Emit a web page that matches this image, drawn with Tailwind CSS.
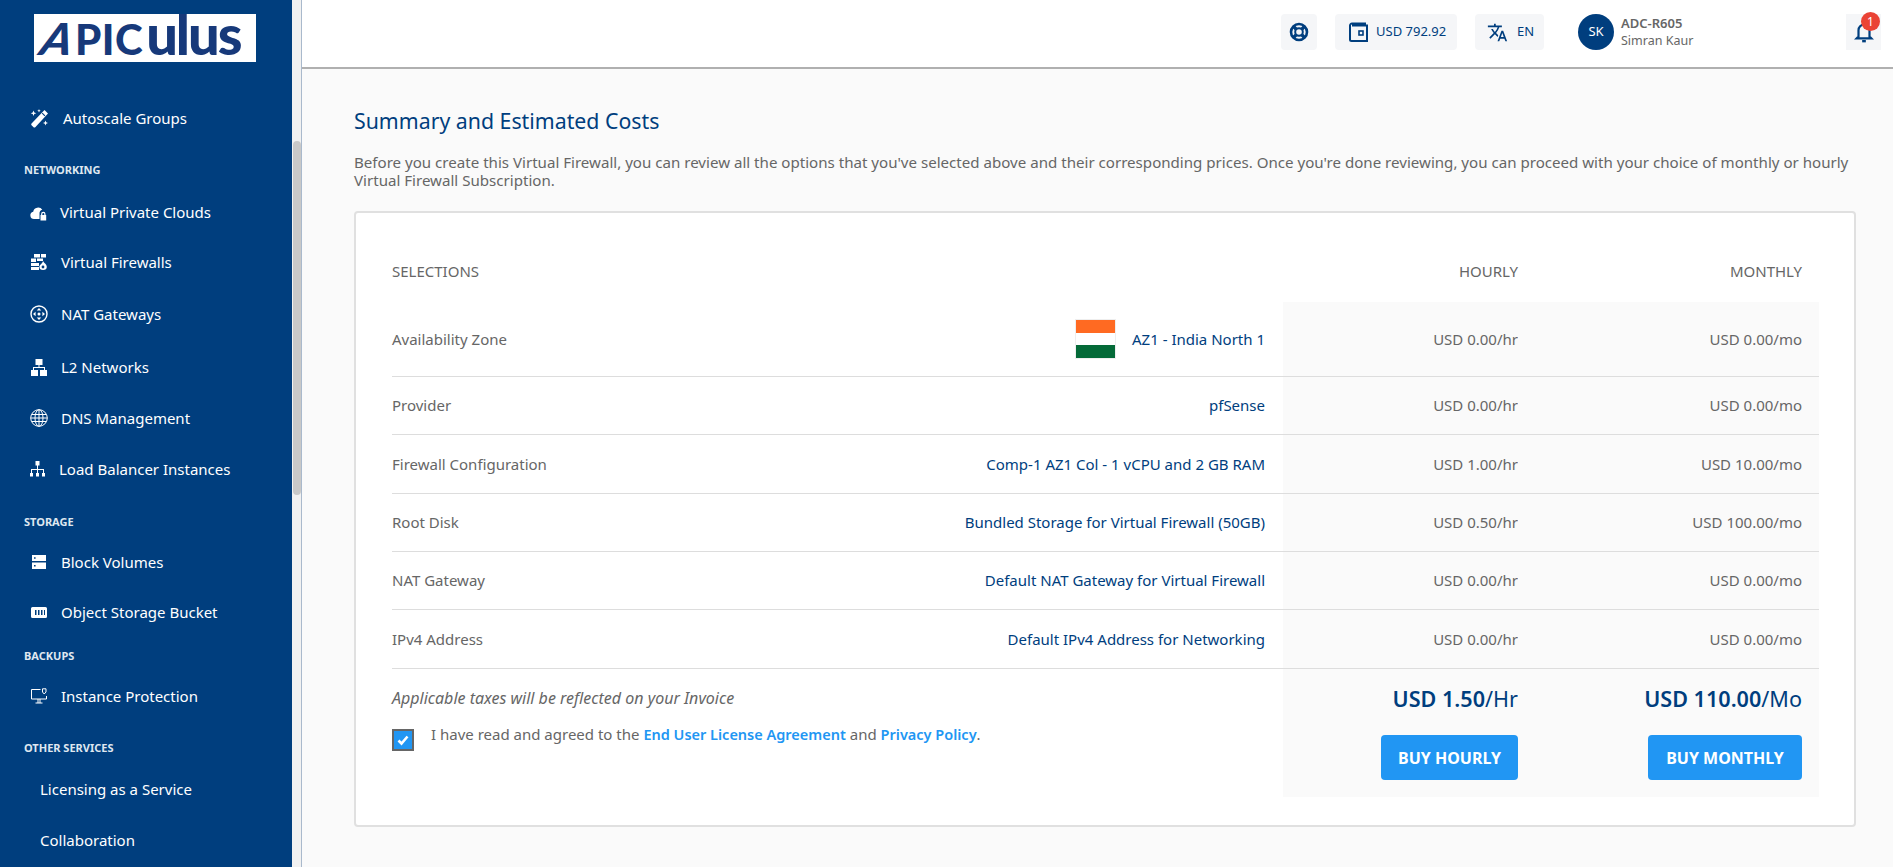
<!DOCTYPE html>
<html lang="en">
<head>
  <meta charset="UTF-8">
  <title>Summary and Estimated Costs</title>
  <script src="https://cdn.jsdelivr.net/npm/@tailwindcss/browser@4"></script>
</head>
<body class="font-['Noto_Sans',sans-serif] text-[15px] text-[#666] bg-[#fafafa] overflow-hidden">
<div class="flex h-[867px] overflow-hidden">
  <!-- Sidebar -->
  <aside class="relative w-[302px] shrink-0 h-full bg-[#f1f1f1] border-r border-[#a9b9cc] overflow-hidden">
    <div class="absolute left-[293px] top-[141px] w-[8px] h-[354px] rounded bg-[#c8c8c8]"></div>
    <div class="w-[292px] h-full bg-[#003e7e] text-white overflow-hidden">
      <div class="h-[93px] pl-[34px] pt-[14px]">
        <!-- logo, kept as real text -->
        <div class="w-[222px] h-[48px] bg-white flex items-baseline pl-[3px] font-['Lato',sans-serif] font-black leading-[40px] text-[#17397a]">
          <span class="text-[44px] skew-x-[-20deg] ml-[6px] mr-[1px]">A</span>
          <span class="text-[42px] tracking-[0.5px]">PIC</span>
          <span class="text-[56px] tracking-[-2px] ml-[3px]">ulus</span>
        </div>
      </div>
      <a class="flex items-center h-[50px] pl-[30px] gap-[14px]">
        <svg class="w-[19px] h-[19px]" viewBox="0 0 19 19" fill="white"><path d="M14.500 1 18 4.500 5.500 18a1.500 1.500 0 0 1-2.200 0L1.800 16.500a1.500 1.500 0 0 1 0-2.200z"/><path fill="#003e7e" d="M11.800 4.500l.8-.8 2.700 2.700-.8.8z"/><path d="M3.500 1.500l.8 2 2 .8-2 .8-.8 2-.8-2-2-.8 2-.8zM15.500 11.500l.7 1.800 1.800.7-1.800.7-.7 1.800-.7-1.800-1.800-.7 1.800-.7zM9 0l.5 1.200 1.200.5-1.200.5L9 3.400l-.5-1.200-1.200-.5 1.200-.5z"/></svg>
        <span>Autoscale Groups</span>
      </a>
      <div class="h-[20px] mt-[17px] pl-[24px] flex items-center text-[11px] font-bold text-[#dfe7f0]">NETWORKING</div>
      <a class="flex items-center h-[50px] mt-[7px] pl-[30px] gap-[13px]">
        <svg class="w-[17px] h-[17px]" viewBox="0 0 17 17" fill="white"><path d="M4 15a3.700 3.700 0 0 1-.8-7.300A5 5 0 0 1 12.300 5.800 4 4 0 0 0 9.500 10v5z"/><path fill-rule="evenodd" d="M10.500 11h.6v-1a2.200 2.200 0 0 1 4.400 0v1h.7v5.500h-5.700zM12.300 11h2v-1a1 1 0 0 0-2 0z"/></svg>
        <span>Virtual Private Clouds</span>
      </a>
      <a class="flex items-center h-[50px] pl-[31px] gap-[14px]">
        <svg class="w-[16px] h-[16px]" viewBox="0 0 16 16" fill="white"><path d="M3 0h6v3.500H3zM10 0h5v3.500h-5zM0 4.500h5V8H0zM6 4.500h6V7H6zM0 9h8v3H0zM0 13h8v3H0z"/><path d="M12 7c.6 1.600 3.800 3.400 3.800 5.800a3.700 3.200 0 0 1-7.400 0C8.400 10.800 11.500 9.800 12 7z"/><circle cx="12" cy="13" r="1.400" fill="#003e7e"/></svg>
        <span>Virtual Firewalls</span>
      </a>
      <a class="flex items-center h-[50px] mt-[2px] pl-[30px] gap-[13px]">
        <svg class="w-[18px] h-[18px]" viewBox="0 0 18 18" fill="none" stroke="white"><circle cx="9" cy="9" r="8" stroke-width="1.400"/><path fill="white" stroke="none" d="M9 3l2.300 2.600H6.700zM9 15l-2.300-2.600h4.600zM3 9l2.600-2.300v4.600zM15 9l-2.600 2.300V6.700z"/><circle cx="9" cy="9" r="1.500" fill="white" stroke="none"/></svg>
        <span>NAT Gateways</span>
      </a>
      <a class="flex items-center h-[50px] mt-[3px] pl-[31px] gap-[14px]">
        <svg class="w-[16px] h-[17px]" viewBox="0 0 16 17" fill="white"><path d="M4.500 0h7v6h-7zM0 11h7v6H0zM9 11h7v6H9z"/><path d="M7.500 5h1v3h5.500v3h-1V9H3v2H2V8h5.500z"/></svg>
        <span>L2 Networks</span>
      </a>
      <a class="flex items-center h-[50px] mt-[1px] pl-[30px] gap-[13px]">
        <svg class="w-[18px] h-[18px]" viewBox="0 0 18 18" fill="none" stroke="white" stroke-width="1"><circle cx="9" cy="9" r="8.300"/><ellipse cx="9" cy="9" rx="4" ry="8.300"/><path d="M9 1v16M.8 9h16.400M2 5.500h14M2 12.500h14"/></svg>
        <span>DNS Management</span>
      </a>
      <a class="flex items-center h-[50px] mt-[1px] pl-[30px] gap-[14px]">
        <svg class="w-[15px] h-[16px]" viewBox="0 0 15 16" fill="white"><path d="M5.500 0h4v4.500h-4zM7 4.500h1V8h6v4h-1V9H8v3H7V9H2v3H1V8h6z"/><path d="M0 12h3v3.500H0zM6 12h3v3.500H6zM12 12h3v3.500h-3z"/></svg>
        <span>Load Balancer Instances</span>
      </a>
      <div class="h-[20px] mt-[18px] pl-[24px] flex items-center text-[11px] font-bold text-[#dfe7f0]">STORAGE</div>
      <a class="flex items-center h-[50px] mt-[5px] pl-[32px] gap-[15px]">
        <svg class="w-[14px] h-[14px]" viewBox="0 0 14 14" fill="white"><path fill-rule="evenodd" d="M0 0h14v6H0zM2 2.200v1.600h1.600V2.200zM0 7.500h14V14H0zM2 10v1.600h1.600V10z"/></svg>
        <span>Block Volumes</span>
      </a>
      <a class="flex items-center h-[50px] pl-[31px] gap-[14px]">
        <svg class="w-[16px] h-[11px]" viewBox="0 0 16 11" fill="white"><path fill-rule="evenodd" d="M1.500 0h13A1.500 1.500 0 0 1 16 1.500v8a1.500 1.500 0 0 1-1.500 1.500h-13A1.500 1.500 0 0 1 0 9.500v-8A1.500 1.500 0 0 1 1.500 0zM4 3v5h1.500V3zM7 3v5h1.500V3zM10 3v5h1.500V3zM13 3v5h1V3z"/></svg>
        <span>Object Storage Bucket</span>
      </a>
      <div class="h-[20px] mt-[9px] pl-[24px] flex items-center text-[11px] font-bold text-[#dfe7f0]">BACKUPS</div>
      <a class="flex items-center h-[50px] mt-[5px] pl-[31px] gap-[14px]">
        <svg class="w-[16px] h-[16px]" viewBox="0 0 16 16" fill="none" stroke="white"><path d="M9.500 1.500H.5v9.500h15V8"/><path d="M4.500 15h7M7 11v4M9 11v4"/><path d="M11.500.8h3.500v3.200L13.200 6 11.500 4z" stroke-width="1"/></svg>
        <span>Instance Protection</span>
      </a>
      <div class="h-[20px] mt-[17px] pl-[24px] flex items-center text-[11px] font-bold text-[#dfe7f0]">OTHER SERVICES</div>
      <a class="flex items-center h-[50px] mt-[6px] pl-[40px]">Licensing as a Service</a>
      <a class="flex items-center h-[50px] mt-[1px] pl-[40px]">Collaboration</a>
    </div>
  </aside>

  <div class="flex-1 min-w-0">
    <!-- Header -->
    <header class="h-[69px] bg-white border-b-2 border-[#b0b0b0] relative">
      <div class="absolute left-[979px] top-[14px] flex items-center h-[36px]">
        <div class="w-[36px] h-[36px] rounded bg-[#f5f6f8] flex items-center justify-center">
          <svg class="w-[20px] h-[20px]" viewBox="0 0 20 20" fill="none" stroke="#003e7e"><circle cx="10" cy="10" r="8" stroke-width="2.600"/><circle cx="10" cy="10" r="3.800" stroke-width="2"/><path stroke-width="3.400" d="M4.500 4.500l2.500 2.500M15.500 4.500l-2.500 2.500M4.500 15.500l2.500-2.500M15.500 15.500l-2.500-2.500"/></svg>
        </div>
        <div class="ml-[18px] w-[122px] h-[36px] rounded bg-[#f5f6f8] flex items-center pl-[14px] gap-[8px] text-[13px] text-[#003e7e]">
          <svg class="w-[19px] h-[20px]" viewBox="0 0 19 20" fill="none" stroke="#003e7e" stroke-width="2"><path d="M16 3.500V1.500H3A2 2 0 0 0 1 3.500v14a1.500 1.500 0 0 0 1.500 1.500H18V3.500H3"/><rect x="10" y="9" width="4" height="4" stroke-width="1.600"/></svg>
          <span>USD 792.92</span>
        </div>
        <div class="ml-[18px] w-[69px] h-[36px] rounded bg-[#f5f6f8] flex items-center pl-[12px] gap-[9px] text-[13px] text-[#003e7e]">
          <svg class="w-[21px] h-[21px]" viewBox="0 0 24 24" fill="#003e7e"><path d="m12.870 15.070-2.540-2.510.030-.030A17.500 17.500 0 0 0 14.070 6H17V4h-7V2H8v2H1v1.990h11.170C11.500 7.920 10.440 9.750 9 11.350 8.070 10.320 7.300 9.190 6.690 8h-2c.73 1.630 1.730 3.170 2.980 4.560l-5.090 5.020L4 19l5-5 3.110 3.110zM18.500 10h-2L12 22h2l1.120-3h4.750L21 22h2zm-2.620 7 1.620-4.330L19.120 17z"/></svg>
          <span>EN</span>
        </div>
        <div class="ml-[34px] w-[36px] h-[36px] rounded-full bg-[#003e7e] text-white text-[13px] flex items-center justify-center">SK</div>
        <div class="ml-[7px] text-[13px] leading-[18px]">
          <div class="font-semibold">ADC-R605</div>
          <div class="text-[12.500px]">Simran Kaur</div>
        </div>
      </div>
      <div class="absolute left-[1544px] top-[14px] w-[35px] h-[36px] bg-[#f5f6f8] flex items-center justify-center">
        <svg class="w-[22px] h-[24px]" viewBox="0 0 24 24" fill="none" stroke="#003e7e" stroke-width="2.400"><path d="M6 17V10a6 6 0 0 1 12 0v7l2 2H4z"/><path d="M10 22h4" stroke-width="2.600"/></svg>
      </div>
      <div class="absolute left-[1559px] top-[12px] w-[19px] h-[19px] rounded-full bg-[#ea4335] text-white text-[12px] flex items-center justify-center">1</div>
    </header>

    <!-- Main -->
    <main class="pl-[52px] pr-[37px] pt-[38px]">
      <h1 class="text-[21.300px] leading-[28px] text-[#003e7e]">Summary and Estimated Costs</h1>
      <p class="mt-[18px] text-[15.100px] leading-[18px]">Before you create this Virtual Firewall, you can review all the options that you've selected above and their corresponding prices. Once you're done reviewing, you can proceed with your choice of monthly or hourly Virtual Firewall Subscription.</p>

      <section class="mt-[22px] w-[1502px] h-[616px] bg-white border-2 border-[#e0e0e0] rounded pl-[36px] pr-[35px]">
        <div class="flex items-center h-[89px] pt-[28px]">
          <div class="w-[891px]">SELECTIONS</div>
          <div class="w-[235px] text-right">HOURLY</div>
          <div class="w-[284px] text-right">MONTHLY</div>
        </div>

        <div class="flex items-stretch h-[75px] border-b border-[#ddd]">
          <div class="w-[891px] flex items-center justify-between pr-[18px]">
            <span>Availability Zone</span>
            <span class="flex items-center gap-[16px] text-[#003e7e]">
              <span class="flex flex-col w-[41px] h-[40px] border border-[#eee]">
                <span class="flex-1 bg-[#ff6a22]"></span><span class="flex-1 bg-white"></span><span class="flex-1 bg-[#046a38]"></span>
              </span>
              AZ1 - India North 1
            </span>
          </div>
          <div class="w-[235px] bg-[#fafafa] flex items-center justify-end">USD 0.00/hr</div>
          <div class="w-[301px] bg-[#fafafa] flex items-center justify-end pr-[17px]">USD 0.00/mo</div>
        </div>
        <div class="flex items-stretch h-[58px] border-b border-[#ddd]">
          <div class="w-[891px] flex items-center justify-between pr-[18px]"><span>Provider</span><span class="text-[#003e7e]">pfSense</span></div>
          <div class="w-[235px] bg-[#fafafa] flex items-center justify-end">USD 0.00/hr</div>
          <div class="w-[301px] bg-[#fafafa] flex items-center justify-end pr-[17px]">USD 0.00/mo</div>
        </div>
        <div class="flex items-stretch h-[59px] border-b border-[#ddd]">
          <div class="w-[891px] flex items-center justify-between pr-[18px]"><span>Firewall Configuration</span><span class="text-[#003e7e]">Comp-1 AZ1 Col - 1 vCPU and 2 GB RAM</span></div>
          <div class="w-[235px] bg-[#fafafa] flex items-center justify-end">USD 1.00/hr</div>
          <div class="w-[301px] bg-[#fafafa] flex items-center justify-end pr-[17px]">USD 10.00/mo</div>
        </div>
        <div class="flex items-stretch h-[58px] border-b border-[#ddd]">
          <div class="w-[891px] flex items-center justify-between pr-[18px]"><span>Root Disk</span><span class="text-[#003e7e]">Bundled Storage for Virtual Firewall (50GB)</span></div>
          <div class="w-[235px] bg-[#fafafa] flex items-center justify-end">USD 0.50/hr</div>
          <div class="w-[301px] bg-[#fafafa] flex items-center justify-end pr-[17px]">USD 100.00/mo</div>
        </div>
        <div class="flex items-stretch h-[58px] border-b border-[#ddd]">
          <div class="w-[891px] flex items-center justify-between pr-[18px]"><span>NAT Gateway</span><span class="text-[#003e7e]">Default NAT Gateway for Virtual Firewall</span></div>
          <div class="w-[235px] bg-[#fafafa] flex items-center justify-end">USD 0.00/hr</div>
          <div class="w-[301px] bg-[#fafafa] flex items-center justify-end pr-[17px]">USD 0.00/mo</div>
        </div>
        <div class="flex items-stretch h-[59px] border-b border-[#ddd]">
          <div class="w-[891px] flex items-center justify-between pr-[18px]"><span>IPv4 Address</span><span class="text-[#003e7e]">Default IPv4 Address for Networking</span></div>
          <div class="w-[235px] bg-[#fafafa] flex items-center justify-end">USD 0.00/hr</div>
          <div class="w-[301px] bg-[#fafafa] flex items-center justify-end pr-[17px]">USD 0.00/mo</div>
        </div>

        <div class="flex items-stretch h-[128px]">
          <div class="w-[891px] pt-[19px]">
            <div class="italic text-[16px] leading-[20px]">Applicable taxes will be reflected on your Invoice</div>
            <div class="flex items-start mt-[21px]">
              <span class="w-[22px] h-[22px] border-2 border-[#666] bg-[#2196f3] flex items-center justify-center">
                <svg class="w-[12px] h-[12px]" viewBox="0 0 12 12" fill="none" stroke="white" stroke-width="2.600"><path d="M1.500 6.500l3 3 6-7"/></svg>
              </span>
              <span class="ml-[17px] leading-[20px] -mt-[5px]">I have read and agreed to the <a class="font-semibold text-[14.500px] text-[#2196f3]">End User License Agreement</a> and <a class="font-semibold text-[14.500px] text-[#2196f3]">Privacy Policy</a>.</span>
            </div>
          </div>
          <div class="w-[235px] bg-[#fafafa] flex flex-col items-end pt-[15px]">
            <div class="text-[21.600px] leading-[30px] text-[#003e7e]"><span class="font-semibold">USD 1.50</span>/Hr</div>
            <button class="mt-[21px] w-[137px] h-[45px] rounded bg-[#2196f3] text-white text-[16px] font-bold">BUY HOURLY</button>
          </div>
          <div class="w-[301px] bg-[#fafafa] flex flex-col items-end pt-[15px] pr-[17px]">
            <div class="text-[21.600px] leading-[30px] text-[#003e7e]"><span class="font-semibold">USD 110.00</span>/Mo</div>
            <button class="mt-[21px] w-[154px] h-[45px] rounded bg-[#2196f3] text-white text-[16px] font-bold">BUY MONTHLY</button>
          </div>
        </div>
      </section>
    </main>
  </div>
</div>
</body>
</html>
